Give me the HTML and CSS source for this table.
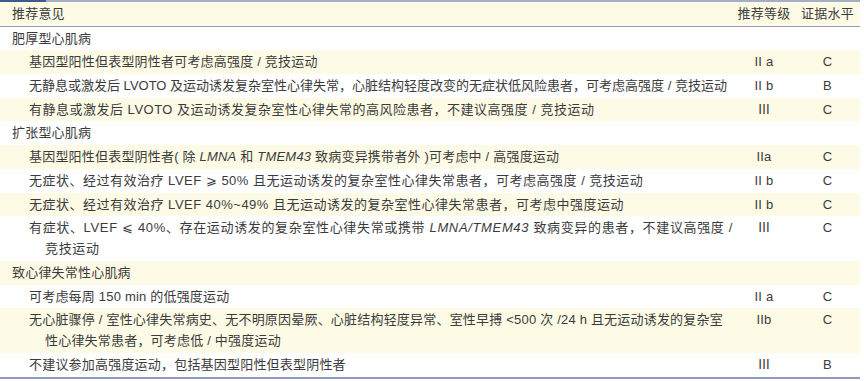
FILE: index.html
```html
<!DOCTYPE html>
<html lang="zh">
<head>
<meta charset="utf-8">
<link rel="stylesheet" href="styles.css">
</head>
<body>
<div class="wrap">
  <div class="topline"></div>
  <table class="rec">
    <colgroup><col class="c1"><col class="c2"><col class="c3"></colgroup>
    <thead>
      <tr><th class="t">推荐意见</th><th class="v">推荐等级</th><th class="v">证据水平</th></tr>
    </thead>
    <tbody>
      <tr><td class="cat">肥厚型心肌病</td><td></td><td></td></tr>
      <tr><td class="sub">基因型阳性但表型阴性者可考虑高强度 / 竞技运动</td><td class="v">II a</td><td class="v">C</td></tr>
      <tr><td class="sub tight">无静息或激发后 LVOTO 及运动诱发复杂室性心律失常，心脏结构轻度改变的无症状低风险患者，可考虑高强度 / 竞技运动</td><td class="v">II b</td><td class="v">B</td></tr>
      <tr><td class="sub loose">有静息或激发后 LVOTO 及运动诱发复杂室性心律失常的高风险患者，不建议高强度 / 竞技运动</td><td class="v">Ⅲ</td><td class="v">C</td></tr>
      <tr><td class="cat">扩张型心肌病</td><td></td><td></td></tr>
      <tr><td class="sub">基因型阳性但表型阴性者( 除 <i>LMNA</i> 和 <i>TMEM43</i> 致病变异携带者外 )可考虑中 / 高强度运动</td><td class="v">IIa</td><td class="v">C</td></tr>
      <tr><td class="sub loose">无症状、经过有效治疗 LVEF ⩾ 50% 且无运动诱发的复杂室性心律失常患者，可考虑高强度 / 竞技运动</td><td class="v">II b</td><td class="v">C</td></tr>
      <tr><td class="sub loose">无症状、经过有效治疗 LVEF 40%~49% 且无运动诱发的复杂室性心律失常患者，可考虑中强度运动</td><td class="v">II b</td><td class="v">C</td></tr>
      <tr class="dbl"><td class="sub looser">有症状、LVEF ⩽ 40%、存在运动诱发的复杂室性心律失常或携带 <i>LMNA/TMEM43</i> 致病变异的患者，不建议高强度 /<br>竞技运动</td><td class="v">Ⅲ</td><td class="v">C</td></tr>
      <tr><td class="cat">致心律失常性心肌病</td><td></td><td></td></tr>
      <tr><td class="sub">可考虑每周 150 min 的低强度运动</td><td class="v">II a</td><td class="v">C</td></tr>
      <tr class="dbl"><td class="sub">无心脏骤停 / 室性心律失常病史、无不明原因晕厥、心脏结构轻度异常、室性早搏 &lt;500 次 /24 h 且无运动诱发的复杂室<br>性心律失常患者，可考虑低 / 中强度运动</td><td class="v">IIb</td><td class="v">C</td></tr>
      <tr><td class="sub">不建议参加高强度运动，包括基因型阳性但表型阴性者</td><td class="v">Ⅲ</td><td class="v">B</td></tr>
    </tbody>
  </table>
</div>
</body>
</html>
```
FILE: styles.css
```css
html, body {
  margin: 0;
  padding: 0;
  background: #ffffff;
}
.wrap {
  width: 860px;
}
.topline {
  height: 2px;
  background: linear-gradient(to right, #3e5b8d 0, #3e5b8d 46px, #a4afc6 46px, #a4afc6 100%);
}
.rec {
  width: 860px;
  border-collapse: collapse;
  table-layout: fixed;
  font-family: "Liberation Sans", "Noto Sans CJK SC", sans-serif;
  font-size: 13px;
  color: #3b3b3b;
  letter-spacing: 0.2px;
  border-bottom: 2px solid #8e9bbd;
}
.c1 { width: 733px; }
.c2 { width: 62px; }
.c3 { width: 65px; }
.rec th, .rec td {
  padding: 2px 0 1.7px;
  line-height: 20px;
  font-weight: normal;
  vertical-align: top;
  text-align: left;
  white-space: nowrap;
}
.rec thead tr {
  background: #fdfbe6;
  border-bottom: 1px solid #8f9ab5;
}
.rec th.t { padding-left: 12px; }
.rec .v { text-align: center; }
.rec tbody tr:nth-child(even) { background: #fdfbe6; }
.rec td.cat { padding-left: 12px; }
.rec td.sub {
  padding-left: 45px;
  text-indent: -16px;
}
.rec td.tight { letter-spacing: 0; }
.rec td.loose { letter-spacing: 0.5px; }
.rec td.looser { letter-spacing: 0.65px; }
.rec tr.dbl td { line-height: 20.5px; }
.rec i { font-style: italic; }
```
